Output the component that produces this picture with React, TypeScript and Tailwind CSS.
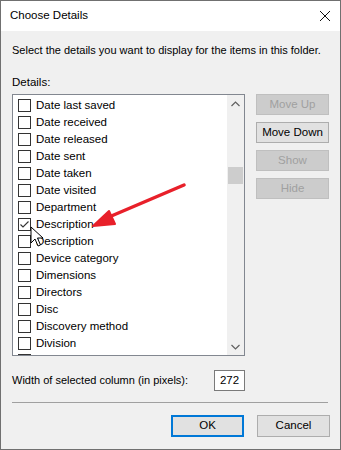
import React from "react";

const items = [
  "Date last saved",
  "Date received",
  "Date released",
  "Date sent",
  "Date taken",
  "Date visited",
  "Department",
  "Description",
  "Description",
  "Device category",
  "Dimensions",
  "Directors",
  "Disc",
  "Discovery method",
  "Division",
  "",
];

const Row = ({ label, checked }: { label: string; checked?: boolean }) => (
  <div className="flex items-center h-[17px] pl-[5px] gap-[5px] shrink-0">
    <div className="w-[13px] h-[13px] border border-[#333333] bg-white flex items-center justify-center shrink-0">
      {checked && (
        <svg width="11" height="11" viewBox="0 0 11 11">
          <path d="M1.5 5.5 L4 8 L9.5 2.5" fill="none" stroke="#333" strokeWidth="1.1" />
        </svg>
      )}
    </div>
    {label && <span className="text-[11.5px] text-black leading-none whitespace-nowrap">{label}</span>}
  </div>
);

const SideBtn = ({ label, enabled }: { label: string; enabled?: boolean }) => (
  <div
    className={
      enabled
        ? "h-[21px] w-[73px] border border-[#adadad] bg-[#e1e1e1] text-black text-[11.5px] flex items-center justify-center"
        : "h-[21px] w-[73px] border border-[#bfbfbf] bg-[#cccccc] text-[#a0a0a0] text-[11.5px] flex items-center justify-center"
    }
  >
    {label}
  </div>
);

export default function App() {
  return (
    <div
      className="relative w-[341px] h-[450px] border border-[#707070] bg-[#f0f0f0] flex flex-col overflow-hidden"
      style={{ fontFamily: '"Liberation Sans", Arial, sans-serif' }}
    >
      {/* title bar */}
      <div className="h-[30px] bg-white flex items-center justify-between pl-[9px] pr-[9px] shrink-0">
        <span className="text-[11.5px] text-black">Choose Details</span>
        <svg width="12" height="12" viewBox="0 0 12 12">
          <path d="M1 1 L11 11 M11 1 L1 11" stroke="#111" strokeWidth="1" />
        </svg>
      </div>

      <div className="flex flex-col px-[11px]">
        <div className="text-[11px] text-black mt-[11px] h-[16px] leading-[16px] whitespace-nowrap">
          Select the details you want to display for the items in this folder.
        </div>
        <div className="text-[11.5px] text-black mt-[16px] h-[16px] leading-[16px]">Details:</div>

        <div className="flex gap-[11px] mt-[4px]">
          {/* list */}
          <div className="w-[233px] h-[262px] border border-[#828790] bg-white flex overflow-hidden">
            <div className="flex-1 flex flex-col pt-[2px] overflow-hidden">
              {items.map((it, i) => (
                <Row key={i} label={it} checked={i === 7} />
              ))}
            </div>
            <div className="w-[17px] bg-[#f0f0f0] flex flex-col items-center shrink-0">
              <div className="h-[17px] w-full flex items-center justify-center">
                <svg width="9" height="6" viewBox="0 0 9 6">
                  <path d="M0.5 5 L4.5 1 L8.5 5" fill="none" stroke="#606060" strokeWidth="1.2" />
                </svg>
              </div>
              <div className="h-[55px]" />
              <div className="h-[17px] w-[15px] bg-[#cdcdcd]" />
              <div className="flex-1" />
              <div className="h-[17px] w-full flex items-center justify-center">
                <svg width="9" height="6" viewBox="0 0 9 6">
                  <path d="M0.5 1 L4.5 5 L8.5 1" fill="none" stroke="#606060" strokeWidth="1.2" />
                </svg>
              </div>
            </div>
          </div>

          {/* buttons */}
          <div className="flex flex-col gap-[7px]">
            <SideBtn label="Move Up" />
            <SideBtn label="Move Down" enabled />
            <SideBtn label="Show" />
            <SideBtn label="Hide" />
          </div>
        </div>

        <div className="flex items-center mt-[14px] h-[21px]">
          <span className="text-[11px] text-black w-[202px] whitespace-nowrap">Width of selected column (in pixels):</span>
          <div className="w-[31px] h-[21px] border border-[#7a7a7a] bg-white text-[11.5px] flex items-center justify-center">
            272
          </div>
        </div>

        <div className="h-px bg-[#a0a0a0] w-[316px] mt-[11px]" />

        <div className="flex justify-end gap-[13px] mt-[12px] w-[318px]">
          <div className="w-[73px] h-[22px] border-2 border-[#0078d7] bg-[#e1e1e1] text-[11.5px] text-black flex items-center justify-center">
            OK
          </div>
          <div className="w-[73px] h-[22px] border border-[#adadad] bg-[#e1e1e1] text-[11.5px] text-black flex items-center justify-center">
            Cancel
          </div>
        </div>
      </div>

      {/* red annotation arrow */}
      <svg className="absolute left-0 top-0 pointer-events-none" width="341" height="450" viewBox="0 0 341 450">
        <path d="M183 184 L108 216" stroke="#e8202a" strokeWidth="3.5" strokeLinecap="round" />
        <path d="M92 225 L108 210 L114 223 Z" fill="#e8202a" stroke="#e8202a" strokeWidth="2" strokeLinejoin="round" />
      </svg>

      {/* mouse cursor */}
      <svg className="absolute left-[29px] top-[225px]" width="14" height="22" viewBox="0 0 14 22">
        <path d="M1 1 L1 17 L5 13 L8 20 L10.5 19 L7.5 12 L13 12 Z" fill="white" stroke="black" strokeWidth="1" strokeLinejoin="round" />
      </svg>
    </div>
  );
}
